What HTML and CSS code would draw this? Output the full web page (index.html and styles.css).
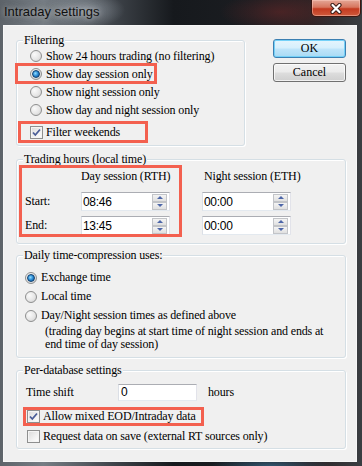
FILE: index.html
```html
<!DOCTYPE html>
<html lang="en">

<head>
    <meta charset="UTF-8">
    <meta name="viewport" content="width=device-width, initial-scale=1.0">
    <title>Intraday settings</title>
    <link rel="stylesheet" href="styles.css">
</head>

<body>
    <div class="window">
        <div class="titlebar">
            <span class="title">Intraday settings</span>
            <button class="close-btn" title="Close">
                <svg width="14" height="11" viewBox="0 0 14 11">
                    <path d="M3.5 2 L10.5 9 M10.5 2 L3.5 9" stroke="#3b1d18" stroke-width="4.2" stroke-linecap="round" fill="none"/>
                    <path d="M3.5 2 L10.5 9 M10.5 2 L3.5 9" stroke="#fff" stroke-width="2.2" stroke-linecap="round" fill="none"/>
                </svg>
            </button>
        </div>

        <div class="client">
            <div class="top-row">
                <!-- Filtering -->
                <fieldset class="group filter-group">
                    <legend>Filtering</legend>
                    <div class="filter-body">
                        <div class="opt"><span class="radio"></span>Show 24 hours trading (no filtering)</div>
                        <div class="opt mark mark-day"><span class="radio checked"></span>Show day session only</div>
                        <div class="opt"><span class="radio"></span>Show night session only</div>
                        <div class="opt"><span class="radio"></span>Show day and night session only</div>
                        <div class="opt opt-weekend mark mark-weekend">
                            <span class="check checked">
                                <svg width="11" height="11" viewBox="0 0 11 11"><path d="M2 5.5 L4.3 8 L9 2.5" stroke="#4a5d97" stroke-width="1.8" fill="none"/></svg>
                            </span>Filter weekends
                        </div>
                    </div>
                </fieldset>

                <div class="actions">
                    <button class="btn btn-default">OK</button>
                    <button class="btn">Cancel</button>
                </div>
            </div>

            <!-- Trading hours -->
            <fieldset class="group hours-group">
                <legend>Trading hours (local time)</legend>
                <div class="hours-grid mark mark-rth">
                    <span></span>
                    <span class="col-head">Day session (RTH)</span>
                    <span class="col-head night-head">Night session (ETH)</span>

                    <span class="row-label">Start:</span>
                    <div class="spin-field">
                        <span class="spin-value">08:46</span>
                        <span class="spin-btns"><span class="spin-up"></span><span class="spin-down"></span></span>
                    </div>
                    <div class="spin-field">
                        <span class="spin-value">00:00</span>
                        <span class="spin-btns"><span class="spin-up"></span><span class="spin-down"></span></span>
                    </div>

                    <span class="row-label">End:</span>
                    <div class="spin-field">
                        <span class="spin-value">13:45</span>
                        <span class="spin-btns"><span class="spin-up"></span><span class="spin-down"></span></span>
                    </div>
                    <div class="spin-field">
                        <span class="spin-value">00:00</span>
                        <span class="spin-btns"><span class="spin-up"></span><span class="spin-down"></span></span>
                    </div>
                </div>
            </fieldset>

            <!-- Daily compression -->
            <fieldset class="group daily-group">
                <legend>Daily time-compression uses:</legend>
                <div class="daily-body">
                    <div class="opt opt-tall"><span class="radio checked"></span>Exchange time</div>
                    <div class="opt opt-tall"><span class="radio"></span>Local time</div>
                    <div class="opt opt-tall"><span class="radio"></span>Day/Night session times as defined above</div>
                    <p class="note">(trading day begins at start time of night session and ends at<br>end time of day session)</p>
                </div>
            </fieldset>

            <!-- Per-database -->
            <fieldset class="group db-group">
                <legend>Per-database settings</legend>
                <div class="db-body">
                    <div class="shift-row">
                        <span class="shift-label">Time shift</span>
                        <span class="text-field">0</span>
                        <span class="shift-unit">hours</span>
                    </div>
                    <div class="opt opt-box mark mark-mixed">
                        <span class="check checked">
                            <svg width="11" height="11" viewBox="0 0 11 11"><path d="M2 5.5 L4.3 8 L9 2.5" stroke="#4a5d97" stroke-width="1.8" fill="none"/></svg>
                        </span>Allow mixed EOD/Intraday data
                    </div>
                    <div class="opt opt-box"><span class="check"></span>Request data on save (external RT sources only)</div>
                </div>
            </fieldset>
        </div>
    </div>
</body>

</html>
```

FILE: styles.css
```css
body {
    margin: 0;
    font-family: 'Liberation Serif', serif;
    font-size: 12px;
    letter-spacing: -0.15px;
    color: #000;
}

/* Window frame */
.window {
    width: 362px;
    height: 466px;
    box-sizing: border-box;
    padding: 0 5px 4px 3px;
    display: flex;
    flex-direction: column;
    background:
        radial-gradient(ellipse 40px 18px at 85px 10px, rgba(190, 200, 210, 0.5), transparent),
        radial-gradient(ellipse 60px 20px at 280px 12px, rgba(120, 40, 40, 0.45), transparent),
        radial-gradient(ellipse 60px 10px at 270px 466px, rgba(60, 120, 160, 0.6), transparent),
        linear-gradient(90deg, #5d6369 0%, #767d84 12%, #3d4248 32%, #16191d 48%, #1b1d21 70%, #2a2224 85%, #3a3e42 100%);
}

.titlebar {
    height: 25px;
    display: flex;
    align-items: flex-start;
    justify-content: space-between;
}

.title {
    font-family: 'Liberation Sans', sans-serif;
    font-size: 13px;
    line-height: 15px;
    letter-spacing: 0;
    margin: 4px 0 0 1px;
    color: #101010;
    text-shadow: 0 0 5px rgba(225, 225, 225, 0.55), 0 0 9px rgba(200, 200, 200, 0.4);
}

.close-btn {
    width: 50px;
    height: 17px;
    margin-right: -4px;
    padding: 0;
    display: flex;
    align-items: center;
    justify-content: center;
    border: 1px solid #3d1610;
    border-top: none;
    border-radius: 0 0 5px 5px;
    background: linear-gradient(#e4a797 0%, #d7765f 45%, #c43a20 55%, #cf5a3c 100%);
    box-shadow: inset 0 0 0 1px rgba(255, 210, 200, 0.45);
}

/* Client area */
.client {
    flex: 1;
    background: #f0f0f0;
    border: 1px solid #f7f7f7;
    padding: 8px 10px 0 12px;
}

.top-row {
    display: flex;
    align-items: flex-start;
}

/* Group boxes */
.group {
    margin: 0;
    padding: 0;
    min-width: 0;
    border: 1px solid #d5dfe5;
    border-radius: 3px;
    box-shadow: inset 1px 1px 0 #fff, 1px 1px 0 #fff;
}

.group legend {
    margin-left: 6px;
    padding: 0 1px;
    line-height: 12px;
    background: #f0f0f0;
}

.filter-group {
    width: 230px;
    box-sizing: border-box;
}

.filter-body {
    padding: 1px 0 4px 13px;
}

.hours-group {
    margin-top: 7px;
}

.daily-group {
    margin-top: 5px;
}

.daily-body {
    padding: 7px 0 6px 8px;
}

.db-group {
    margin-top: 6px;
}

.db-body {
    padding: 8px 0 2px 9px;
}

/* Option rows */
.opt {
    display: flex;
    align-items: center;
    height: 18px;
    white-space: nowrap;
}

.opt-tall {
    height: 19px;
}

.opt-weekend {
    margin-top: 4px;
}

.opt-box {
    height: 20px;
    padding-left: 1px;
}

.radio {
    width: 12px;
    height: 12px;
    box-sizing: border-box;
    border-radius: 50%;
    border: 1px solid #8e8f8f;
    background: radial-gradient(circle at 35% 35%, #fafafa 0%, #e6e6e6 55%, #c9c9c9 100%);
    margin-right: 4px;
    display: flex;
    align-items: center;
    justify-content: center;
    flex: none;
}

.radio.checked::after {
    content: "";
    width: 6px;
    height: 6px;
    border-radius: 50%;
    border: 1px solid #0f3f6e;
    background: radial-gradient(circle at 40% 40%, #8fdcff 0%, #2a8ad4 50%, #0c4f93 100%);
}

.check {
    width: 13px;
    height: 13px;
    box-sizing: border-box;
    border: 1px solid #8e8f8f;
    background: linear-gradient(135deg, #d9d9d9 0%, #f2f2f2 60%, #ffffff 100%);
    box-shadow: inset 0 0 0 1px #f4f4f4;
    margin-right: 3px;
    display: flex;
    align-items: center;
    justify-content: center;
    flex: none;
}

/* Buttons */
.actions {
    display: flex;
    flex-direction: column;
    gap: 5px;
    margin: 5px 0 0 28px;
}

.btn {
    width: 73px;
    height: 19px;
    padding: 0;
    font: inherit;
    line-height: 15px;
    color: #000;
    border: 1px solid #707070;
    border-radius: 3px;
    background: linear-gradient(#f2f2f2 0%, #ebebeb 48%, #dddddd 52%, #cfcfcf 100%);
    box-shadow: inset 0 0 0 1px rgba(255, 255, 255, 0.7);
}

.btn-default {
    border-color: #3c7fb1;
    background: linear-gradient(#e5f5fd 0%, #d6effc 48%, #bfe5fa 52%, #a9daf4 100%);
    box-shadow: inset 0 0 0 1px #74d1f8;
}

/* Trading hours grid */
.hours-grid {
    display: grid;
    grid-template-columns: 56px 121px 89px;
    row-gap: 5px;
    align-items: center;
    margin: 4px 0 8px 8px;
}

.col-head {
    height: 14px;
    line-height: 14px;
    margin-bottom: 4px;
    white-space: nowrap;
}

.night-head {
    padding-left: 2px;
}

.spin-field {
    width: 89px;
    height: 19px;
    box-sizing: border-box;
    display: flex;
    align-items: center;
    background: #fff;
    border: 1px solid;
    border-color: #abadb3 #e2e3ea #e3e9ef #dbdfe6;
}

.spin-value,
.text-field {
    font-family: 'Liberation Sans', sans-serif;
    font-size: 12px;
    letter-spacing: -0.3px;
}

.spin-value {
    padding-left: 1px;
}

.spin-btns {
    margin-left: auto;
    margin-right: 2px;
    width: 15px;
    height: 16px;
    display: flex;
    flex-direction: column;
}

.spin-up,
.spin-down {
    flex: 1;
    box-sizing: border-box;
    border: 1px solid #c2c4c8;
    background: linear-gradient(#f4f4f4, #e0e0e0);
    display: flex;
    align-items: center;
    justify-content: center;
}

.spin-up::after,
.spin-down::after {
    content: "";
    border-left: 3px solid transparent;
    border-right: 3px solid transparent;
}

.spin-up::after {
    border-bottom: 3px solid #4d66a8;
}

.spin-down::after {
    border-top: 3px solid #4d66a8;
}

/* Daily note */
.note {
    margin: 0 0 0 20px;
    line-height: 13px;
    white-space: nowrap;
}

/* Per-database */
.shift-row {
    display: flex;
    align-items: center;
    height: 17px;
    margin-bottom: 5px;
}

.shift-label {
    width: 92px;
}

.text-field {
    width: 79px;
    height: 17px;
    box-sizing: border-box;
    padding-left: 2px;
    line-height: 15px;
    background: #fff;
    border: 1px solid;
    border-color: #abadb3 #e2e3ea #e3e9ef #dbdfe6;
}

.shift-unit {
    margin-left: 11px;
}

/* Red annotation frames */
.mark {
    position: relative;
}

.mark::after {
    content: "";
    position: absolute;
    box-sizing: border-box;
    border: 3px solid #f3604f;
    pointer-events: none;
}

.mark-day::after {
    left: -15px;
    top: -2px;
    width: 142px;
    height: 21px;
}

.mark-weekend::after {
    left: -12px;
    top: -2px;
    width: 130px;
    height: 22px;
}

.mark-rth::after {
    left: -6px;
    top: -4px;
    width: 163px;
    height: 72px;
}

.mark-mixed::after {
    left: -3px;
    top: 1px;
    width: 181px;
    height: 19px;
}
```
